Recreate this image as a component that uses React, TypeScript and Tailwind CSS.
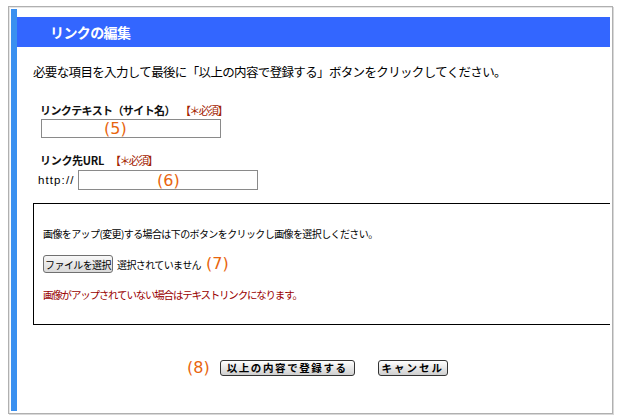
import React from "react";

const jp = { fontFamily: '"Noto Sans CJK JP", "Noto Sans", sans-serif' } as const;
const num = { fontFamily: '"DejaVu Sans", sans-serif' } as const;

export default function App() {
  return (
    <div className="w-[620px] h-[420px] bg-white pt-[6px] pl-[8px] overflow-hidden" style={jp}>
      <div className="w-[605px] h-[408px] border border-[#b0b0b0] shadow-[1px_1px_0_#d8d8d8,inset_1px_1px_0_#e6e6e6] p-[2px] bg-white">
        <div className="flex h-full">
          <div className="w-[6px] shrink-0 bg-[#3a90f0]" />
          <div className="flex-1 min-w-0 overflow-hidden flex flex-col">
            <div className="mt-[8px] h-[30px] bg-[#3366ff] flex items-center pl-[33px]">
              <span className="text-white font-bold text-[14px] leading-none tracking-[-0.6px]">リンクの編集</span>
            </div>

            <div className="mt-[17px] pl-[16px] text-[12.5px] leading-[16px] tracking-[-0.65px] text-black whitespace-nowrap">
              必要な項目を入力して最後に「以上の内容で登録する」ボタンをクリックしてください。
            </div>

            <div className="mt-[23px] pl-[23px] text-[11px] leading-[14px] font-bold text-[#111] whitespace-nowrap flex">
              <span className="tracking-[-0.6px]">リンクテキスト（サイト名）</span>
              <span className="ml-[5px] text-[#a32200] font-normal tracking-[-1.6px]">【＊必須】</span>
            </div>
            <div className="mt-[2px] pl-[24px]">
              <div className="relative w-[180px] h-[19px] border border-[#8a8a8a] bg-white">
                <span className="absolute left-[62px] top-[-1px] text-[16px] leading-[19px] text-[#e8650e]" style={num}>(5)</span>
              </div>
            </div>

            <div className="mt-[15px] pl-[23px] text-[11px] leading-[14px] font-bold text-[#111] whitespace-nowrap flex">
              <span className="tracking-[-0.3px]">リンク先URL</span>
              <span className="ml-[6px] text-[#a32200] font-normal tracking-[-1.6px]">【＊必須】</span>
            </div>
            <div className="mt-[3px] pl-[21px] flex items-center">
              <span className="w-[37px] text-[11.5px] leading-[14px] tracking-[1.1px] text-black mr-[3px]" style={{ fontFamily: '"Liberation Sans", sans-serif' }}>http://</span>
              <div className="relative w-[180px] h-[20px] border border-[#8a8a8a] bg-white">
                <span className="absolute left-[78px] top-[0px] text-[16px] leading-[19px] text-[#e8650e]" style={num}>(6)</span>
              </div>
            </div>

            <div className="mt-[13px] ml-[16px] w-[620px] h-[122px] shrink-0 border border-black pl-[9px] pt-[23px]">
              <div className="text-[10px] leading-[14px] tracking-[-0.6px] text-black whitespace-nowrap">
                画像をアップ(変更)する場合は下のボタンをクリックし画像を選択しください。
              </div>
              <div className="mt-[14px] flex items-center whitespace-nowrap">
                <div className="w-[70px] h-[18px] flex items-center justify-center border border-[#707070] rounded-[3px] bg-gradient-to-b from-[#f8f8f8] to-[#d9d9d9] text-[10px] tracking-[-0.6px] text-black">
                  ファイルを選択
                </div>
                <span className="ml-[4px] text-[10px] tracking-[-0.6px] text-black">選択されていません</span>
                <span className="ml-[5px] text-[16px] leading-[18px] text-[#e8650e]" style={num}>(7)</span>
              </div>
              <div className="mt-[15px] text-[10.5px] leading-[14px] tracking-[-1.2px] text-[#990000] whitespace-nowrap">
                画像がアップされていない場合はテキストリンクになります。
              </div>
            </div>

            <div className="mt-[35px] pl-[170px] flex items-center whitespace-nowrap">
              <span className="text-[16px] leading-[16px] text-[#e8650e]" style={num}>(8)</span>
              <div className="ml-[10px] w-[135px] h-[16px] flex items-center justify-center border border-[#333] rounded-[3px] bg-gradient-to-b from-white to-[#cfcfcf] text-[10.5px] font-bold tracking-[1.6px] text-black">
                以上の内容で登録する
              </div>
              <div className="ml-[23px] w-[70px] h-[16px] flex items-center justify-center border border-[#333] rounded-[3px] bg-gradient-to-b from-white to-[#cfcfcf] text-[10.5px] font-bold tracking-[2px] text-black">
                キャンセル
              </div>
            </div>
          </div>
        </div>
      </div>
    </div>
  );
}
